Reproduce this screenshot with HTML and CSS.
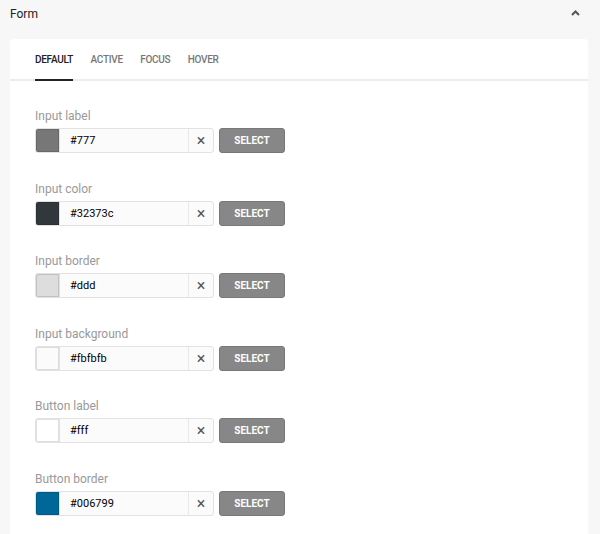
FILE: index.html
```html
<!DOCTYPE html>
<html lang="en">
<head>
    <meta charset="UTF-8">
    <meta name="viewport" content="width=device-width, initial-scale=1.0">
    <title>Form colors</title>
    <link rel="stylesheet" href="styles.css">
</head>
<body>
    <div class="panel-header">
        <span class="panel-title">Form</span>
        <svg class="chevron" width="9" height="6" viewBox="0 0 9 6">
            <polyline points="1,5 4.5,1.5 8,5" fill="none" stroke="#555" stroke-width="2"/>
        </svg>
    </div>
    <div class="card">
        <div class="tabs">
            <div class="tab active">Default</div>
            <div class="tab">Active</div>
            <div class="tab">Focus</div>
            <div class="tab">Hover</div>
        </div>
        <div class="fields">
            <div class="field">
                <div class="field-label">Input label</div>
                <div class="field-row">
                    <div class="color-input">
                        <span class="swatch" style="background-color: #777;"></span>
                        <span class="value">#777</span>
                        <span class="clear">&times;</span>
                    </div>
                    <button class="select-btn">Select</button>
                </div>
            </div>
            <div class="field">
                <div class="field-label">Input color</div>
                <div class="field-row">
                    <div class="color-input">
                        <span class="swatch" style="background-color: #32373c;"></span>
                        <span class="value">#32373c</span>
                        <span class="clear">&times;</span>
                    </div>
                    <button class="select-btn">Select</button>
                </div>
            </div>
            <div class="field">
                <div class="field-label">Input border</div>
                <div class="field-row">
                    <div class="color-input">
                        <span class="swatch" style="background-color: #ddd;"></span>
                        <span class="value">#ddd</span>
                        <span class="clear">&times;</span>
                    </div>
                    <button class="select-btn">Select</button>
                </div>
            </div>
            <div class="field">
                <div class="field-label">Input background</div>
                <div class="field-row">
                    <div class="color-input">
                        <span class="swatch" style="background-color: #fbfbfb;"></span>
                        <span class="value">#fbfbfb</span>
                        <span class="clear">&times;</span>
                    </div>
                    <button class="select-btn">Select</button>
                </div>
            </div>
            <div class="field">
                <div class="field-label">Button label</div>
                <div class="field-row">
                    <div class="color-input">
                        <span class="swatch" style="background-color: #fff;"></span>
                        <span class="value">#fff</span>
                        <span class="clear">&times;</span>
                    </div>
                    <button class="select-btn">Select</button>
                </div>
            </div>
            <div class="field">
                <div class="field-label">Button border</div>
                <div class="field-row">
                    <div class="color-input">
                        <span class="swatch" style="background-color: #006799;"></span>
                        <span class="value">#006799</span>
                        <span class="clear">&times;</span>
                    </div>
                    <button class="select-btn">Select</button>
                </div>
            </div>
        </div>
    </div>
</body>
</html>
```

FILE: styles.css
```css
body {
    font-family: Roboto, "Liberation Sans", Arial, sans-serif;
    margin: 0;
    background-color: #f7f7f7;
    color: #333;
    overflow: hidden;
}
.panel-header {
    display: flex;
    align-items: center;
    justify-content: space-between;
    height: 28px;
    padding: 0 20px 0 10px;
}
.panel-title {
    font-size: 12px;
    color: #222;
}
.chevron {
    display: block;
    margin-top: -2px;
}
.card {
    margin: 11px 12px 0 10px;
    background-color: white;
    border-radius: 4px;
    min-height: 600px;
}
.tabs {
    display: flex;
    gap: 17.5px;
    height: 40px;
    padding-left: 25px;
    border-bottom: 2px solid #ececec;
}
.tab {
    display: flex;
    align-items: center;
    font-size: 10px;
    font-weight: 500;
    letter-spacing: -0.3px;
    text-transform: uppercase;
    color: #777;
    border-bottom: 2px solid transparent;
    margin-bottom: -2px;
}
.tab.active {
    color: #222;
    border-bottom-color: #222;
}
.fields {
    padding: 27px 25px 0;
}
.field {
    margin-bottom: 27.5px;
}
.field-label {
    font-size: 12px;
    line-height: 16px;
    color: #999;
    margin-bottom: 4px;
}
.field-row {
    display: flex;
    gap: 5px;
}
.color-input {
    display: flex;
    width: 179px;
    height: 25px;
    box-sizing: border-box;
    border: 1px solid #e2e2e2;
    border-radius: 3px;
    background-color: #fbfbfb;
}
.swatch {
    width: 23px;
    border-right: 1px solid #e2e2e2;
    border-radius: 2px 0 0 2px;
    box-shadow: inset 0 0 0 1px rgba(0,0,0,0.12);
}
.value {
    flex: 1;
    display: flex;
    align-items: center;
    padding-left: 10px;
    font-size: 11px;
    color: #000;
}
.clear {
    width: 24px;
    display: flex;
    align-items: center;
    justify-content: center;
    border-left: 1px solid #e8e8e8;
    font-size: 16px;
    color: #555;
}
.select-btn {
    width: 66px;
    height: 25px;
    padding: 0;
    background-color: #878787;
    border: 1px solid #777;
    border-radius: 3px;
    color: white;
    font-family: inherit;
    font-size: 10px;
    font-weight: 700;
    text-transform: uppercase;
}
```
